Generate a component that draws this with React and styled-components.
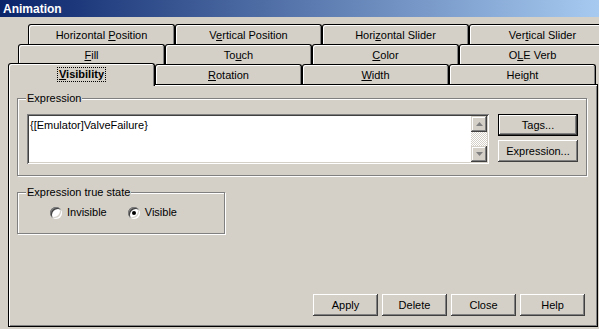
import React from "react";
import styled, { createGlobalStyle } from "styled-components";

const GlobalStyle = createGlobalStyle`
  html, body {
    margin: 0;
    padding: 0;
    background: #d4d0c8;
    overflow: hidden;
  }
  body {
    font-family: "Liberation Sans", Arial, sans-serif;
    font-size: 11px;
    color: #000;
  }
`;

const Window = styled.div`
  width: 599px;
  height: 329px;
  background: #d4d0c8;
  display: flex;
  flex-direction: column;
  overflow: hidden;
`;

const TitleBar = styled.div`
  height: 17px;
  flex: 0 0 17px;
  display: flex;
  align-items: center;
  padding-left: 3px;
  background: linear-gradient(to right, #0a246a, #a6caf0);
  color: #fff;
  font-weight: bold;
  font-size: 12px;
`;

const TabStack = styled.div`
  margin-top: 7px;
  display: flex;
  flex-direction: column;
`;

const TabRow = styled.div`
  display: flex;
  align-items: flex-start;
  height: 20px;
  margin-left: ${({ $indent }) => $indent}px;
`;

const Tab = styled.div`
  flex: 0 0 147px;
  box-sizing: border-box;
  height: ${({ $active }) => ($active ? 23 : 20)}px;
  margin-top: ${({ $active }) => ($active ? -1 : 0)}px;
  border: 1px solid #000;
  border-bottom: none;
  border-radius: 3px 3px 0 0;
  box-shadow: inset 1px 1px 0 #fff, inset -1px 0 0 #808080;
  background: #d4d0c8;
  display: flex;
  align-items: flex-start;
  padding-top: ${({ $active }) => ($active ? 4 : 4)}px;
  justify-content: center;
  position: relative;
  z-index: ${({ $active }) => ($active ? 2 : 0)};
  font-weight: ${({ $active }) => ($active ? "bold" : "normal")};
  white-space: pre;
`;

const TabText = styled.span`
  line-height: 13px;
  outline: ${({ $focus }) => ($focus ? "1px dotted #000" : "none")};
  padding: 0 1px;
`;

const Panel = styled.div`
  flex: 1;
  margin: 0 1px 2px 8px;
  border: 1px solid #000;
  box-shadow: inset 1px 1px 0 #fff, inset -1px -1px 0 #808080;
  display: flex;
  flex-direction: column;
  padding: 13px 10px 10px 8px;
  position: relative;
  z-index: 1;
`;

const GroupBox = styled.div`
  position: relative;
  box-sizing: border-box;
  border: 1px solid #808080;
  box-shadow: inset 1px 1px 0 #fff, 1px 1px 0 #fff;
  width: ${({ $width }) => $width}px;
  height: ${({ $height }) => $height}px;
  margin-top: ${({ $top }) => $top || 0}px;
`;

const Caption = styled.span`
  position: absolute;
  top: -7px;
  left: 8px;
  padding: 0 1px;
  background: #d4d0c8;
  line-height: 13px;
`;

const ExpressionBody = styled.div`
  display: flex;
  gap: 9px;
  padding: 15px 8px 0 9px;
`;

const TextBox = styled.div`
  box-sizing: border-box;
  width: 462px;
  height: 50px;
  background: #fff;
  box-shadow: inset 1px 1px 0 #808080, inset -1px -1px 0 #fff,
    inset 2px 2px 0 #404040, inset -2px -2px 0 #d4d0c8;
  padding: 2px;
  display: flex;
`;

const TextValue = styled.div`
  flex: 1;
  padding: 3px 0 0 1px;
  line-height: 13px;
`;

const ScrollBar = styled.div`
  width: 16px;
  display: flex;
  flex-direction: column;
`;

const ScrollButton = styled.div`
  height: 16px;
  flex: 0 0 16px;
  box-sizing: border-box;
  background: #d4d0c8;
  box-shadow: inset -1px -1px 0 #404040, inset 1px 1px 0 #d4d0c8,
    inset -2px -2px 0 #808080, inset 2px 2px 0 #fff;
  display: flex;
  align-items: center;
  justify-content: center;
`;

const ScrollTrack = styled.div`
  flex: 1;
  background-color: #fff;
  background-image: conic-gradient(
    #d4d0c8 25%,
    #fff 0 50%,
    #d4d0c8 0 75%,
    #fff 0
  );
  background-size: 2px 2px;
`;

const ButtonColumn = styled.div`
  display: flex;
  flex-direction: column;
  gap: 4px;
`;

const Button = styled.div`
  box-sizing: border-box;
  width: ${({ $width }) => $width}px;
  height: 22px;
  background: #d4d0c8;
  display: flex;
  align-items: center;
  justify-content: center;
  border: ${({ $default }) => ($default ? "1px solid #000" : "none")};
  box-shadow: inset -1px -1px 0 #404040, inset 1px 1px 0 #fff,
    inset -2px -2px 0 #808080, inset 2px 2px 0 #d4d0c8;
`;

const RadioRow = styled.div`
  display: flex;
  align-items: center;
  padding: 13px 0 0 32px;
`;

const RadioItem = styled.label`
  display: flex;
  align-items: center;
  gap: 5px;
  margin-right: ${({ $gap }) => $gap || 0}px;
  line-height: 13px;
`;

const RadioCircle = styled.span`
  width: 12px;
  height: 12px;
  border-radius: 50%;
  background: #fff;
  box-shadow: inset 1px 1px 0 #808080, inset -1px -1px 0 #fff,
    inset 2px 2px 0 #404040, inset -2px -2px 0 #d4d0c8;
  display: flex;
  align-items: center;
  justify-content: center;
  &::after {
    content: "";
    width: 4px;
    height: 4px;
    border-radius: 50%;
    background: ${({ $checked }) => ($checked ? "#000" : "transparent")};
  }
`;

const Footer = styled.div`
  margin-top: auto;
  display: flex;
  justify-content: flex-end;
  gap: 4px;
  padding-right: 2px;
`;

const Arrow = ({ up }) => (
  <svg width="7" height="4" viewBox="0 0 7 4">
    <polygon points={up ? "3.5,0 7,4 0,4" : "0,0 7,0 3.5,4"} fill="#808080" />
  </svg>
);

const rows = [
  {
    indent: 28,
    tabs: [
      ["Horizontal ", "P", "osition"],
      ["V", "e", "rtical Position"],
      ["Hori", "z", "ontal Slider"],
      ["Ver", "t", "ical Slider"],
    ],
  },
  {
    indent: 18,
    tabs: [
      ["", "F", "ill"],
      ["To", "u", "ch"],
      ["", "C", "olor"],
      ["O", "L", "E Verb"],
    ],
  },
  {
    indent: 8,
    tabs: [
      ["", "V", "isibility"],
      ["", "R", "otation"],
      ["", "W", "idth"],
      ["Hei", "g", "ht"],
    ],
  },
];

export default function App() {
  return (
    <>
      <GlobalStyle />
      <Window>
        <TitleBar>Animation</TitleBar>
        <TabStack>
          {rows.map((row, r) => (
            <TabRow key={r} $indent={row.indent}>
              {row.tabs.map((parts, i) => {
                const active = r === 2 && i === 0;
                return (
                  <Tab key={i} $active={active}>
                    <TabText $focus={active}>
                      {parts[0]}
                      <u>{parts[1]}</u>
                      {parts[2]}
                    </TabText>
                  </Tab>
                );
              })}
            </TabRow>
          ))}
        </TabStack>
        <Panel>
          <GroupBox $width={570} $height={78}>
            <Caption>Expression</Caption>
            <ExpressionBody>
              <TextBox>
                <TextValue>{"{[Emulator]ValveFailure}"}</TextValue>
                <ScrollBar>
                  <ScrollButton>
                    <Arrow up />
                  </ScrollButton>
                  <ScrollTrack />
                  <ScrollButton>
                    <Arrow />
                  </ScrollButton>
                </ScrollBar>
              </TextBox>
              <ButtonColumn>
                <Button $width={80} $default>
                  Tags...
                </Button>
                <Button $width={80}>Expression...</Button>
              </ButtonColumn>
            </ExpressionBody>
          </GroupBox>
          <GroupBox $width={208} $height={42} $top={16}>
            <Caption>Expression true state</Caption>
            <RadioRow>
              <RadioItem $gap={21}>
                <RadioCircle />
                Invisible
              </RadioItem>
              <RadioItem>
                <RadioCircle $checked />
                Visible
              </RadioItem>
            </RadioRow>
          </GroupBox>
          <Footer>
            <Button $width={65}>Apply</Button>
            <Button $width={65}>Delete</Button>
            <Button $width={65}>Close</Button>
            <Button $width={65}>Help</Button>
          </Footer>
        </Panel>
      </Window>
    </>
  );
}
